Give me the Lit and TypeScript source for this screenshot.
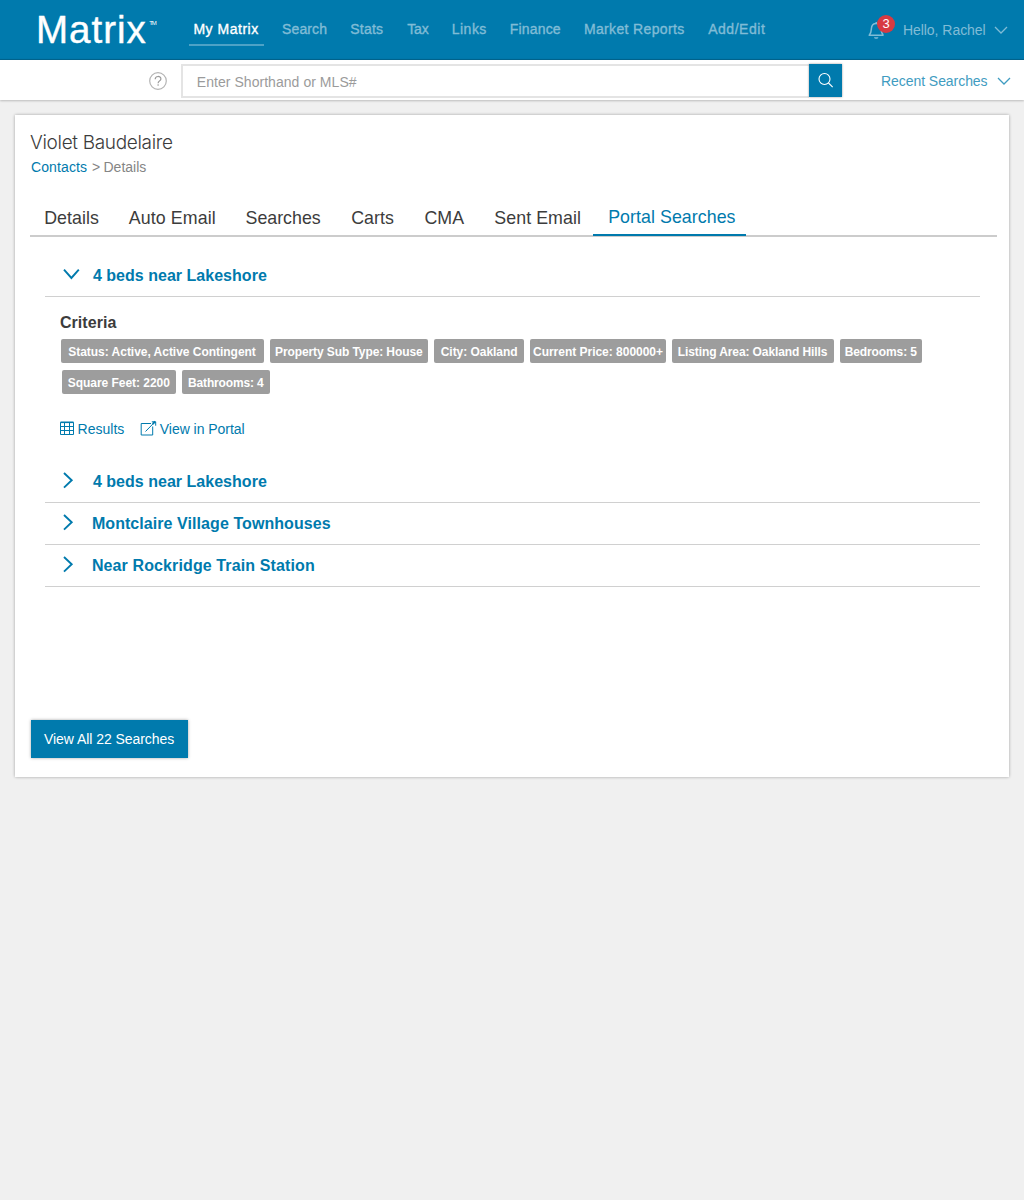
import { LitElement, html, css, svg } from "lit";
import { customElement, property } from "lit/decorators.js";

/** One line of text whose letters are tracked so that it fills a given width. */
@customElement("fit-label")
class FitLabel extends LitElement {
  @property() text = "";
  @property({ type: Number }) w = 0;

  static styles = css`
    :host { display: block; flex: none; white-space: pre; }
  `;

  updated() {
    const cs = getComputedStyle(this);
    const ctx = document.createElement("canvas").getContext("2d")!;
    ctx.font = `${cs.fontWeight} ${cs.fontSize} ${cs.fontFamily}`;
    const m = ctx.measureText(this.text);
    const ink = m.actualBoundingBoxLeft + m.actualBoundingBoxRight;
    this.style.width = `${this.w}px`;
    this.style.textIndent = `${m.actualBoundingBoxLeft}px`;
    this.style.letterSpacing = `${(this.w - ink) / Math.max(1, this.text.length - 1)}px`;
  }

  render() {
    return html`${this.text}`;
  }
}

const label = (text: string, w: number) => html`<fit-label .text=${text} .w=${w}></fit-label>`;

/** Text, text width, space to the next item. */
const NAV: [string, number, number][] = [
  ["My Matrix", 63.8, 18],
  ["Search", 44.2, 24.1],
  ["Stats", 32.8, 24.1],
  ["Tax", 21.6, 24],
  ["Links", 33.6, 24.3],
  ["Finance", 50.2, 24.1],
  ["Market Reports", 99.3, 23.9],
  ["Add/Edit", 56.8, 0],
];

const TABS: [string, number, number][] = [
  ["Details", 53.8, 45.2],
  ["Auto Email", 86, 128.8],
  ["Searches", 75.2, 245.6],
  ["Carts", 42.8, 351.2],
  ["CMA", 39.8, 424.5],
  ["Sent Email", 85.6, 494.4],
];

const TAGS: [string, number, number][][] = [
  [
    ["Status: Active, Active Contingent", 188.5, 203],
    ["Property Sub Type: House", 148, 158],
    ["City: Oakland", 76.5, 90],
    ["Current Price: 800000+", 130, 136],
    ["Listing Area: Oakland Hills", 150.5, 162],
    ["Bedrooms: 5", 72.5, 82],
  ],
  [
    ["Square Feet: 2200", 102.5, 114],
    ["Bathrooms: 4", 76, 88],
  ],
];

const SEARCHES: [string, number][] = [
  ["4 beds near Lakeshore", 174],
  ["Montclaire Village Townhouses", 237.8],
  ["Near Rockridge Train Station", 221],
];

const chevron = svg`<path d="M1 1l6 6 6-6" fill="none" stroke="currentColor" stroke-width="1.3"/>`;

@customElement("app-root")
class AppRoot extends LitElement {
  static styles = css`
    :host {
      display: block;
      min-height: 1200px;
      background: #f0f0f0;
      font: 14px/20px "Liberation Sans", Arial, sans-serif;
      color: #3c3c3c;
    }
    * { box-sizing: border-box; }
    svg { display: block; flex: none; }
    .header {
      height: 60px;
      display: flex;
      background: #007aad;
      box-shadow: inset 0 -2px 1px -1px #00628b;
      color: #80bcd6;
    }
    .logo { display: flex; flex: none; width: 188.5px; padding: 8px 0 0 39px; color: #fff; }
    .word { font-size: 38.5px; line-height: 44px; -webkit-text-stroke: 0.4px currentColor; }
    .tm { font-size: 6px; line-height: 10px; margin: 10px 0 0 3.8px; }
    .nav { display: flex; flex: none; width: 679.5px; padding-top: 19px; -webkit-text-stroke: 0.35px currentColor; }
    .nav-item { flex: none; height: 27px; }
    .nav-item.on { color: #fff; border-bottom: 2px solid #4da2c6; padding-left: 5.9px; width: 75.5px; }
    .user { display: flex; padding-top: 20px; }
    .bell { position: relative; width: 35.9px; }
    .bell svg { margin-top: 1px; }
    .badge {
      position: absolute; left: 9px; top: -5px; width: 18px; height: 18px; border-radius: 50%;
      background: #d73a42; color: #fff; font-size: 13px; line-height: 18px; text-align: center;
    }
    .user .chev { margin: 6px 0 0 8.1px; }
    .bar {
      height: 40px; display: flex; padding: 4px 0 0 149px; background: #fff;
      box-shadow: 0 1px 2px rgba(0, 0, 0, 0.22);
    }
    .help { margin: 8px 14px 0 0; }
    .input {
      width: 628px; height: 34px; border: 2px solid #e4e4e4; border-right: 0; padding: 6px 0 0 14.8px; color: #9b9b9b;
      margin-top: -0.5px;
    }
    .go {
      width: 33px; height: 33px; padding: 8px 0 0 9px; background: #007aad; color: #fff;
      box-shadow: 0 0 2px rgba(0, 0, 0, 0.4);
    }
    .recent { display: flex; padding: 7px 0 0 40px; color: #3f9cc1; }
    .recent .chev { margin: 6px 0 0 9px; }
    .card {
      margin: 15px 15px 0; height: 662px; padding: 16px 12px 0 15px; background: #fff;
      box-shadow: 0 0 3px rgba(0, 0, 0, 0.32);
    }
    .title { font: 300 19px/24px Inter, "Liberation Sans", sans-serif; }
    .crumbs { display: flex; gap: 5.1px; margin-top: 2px; padding-left: 1px; color: #858585; }
    .link { color: #007aad; }
    .tabs {
      display: flex; margin-top: 27px; height: 33px; border-bottom: 2px solid #ccc;
      font-size: 17.8px; line-height: 24px;
    }
    .tab { flex: none; padding-top: 2px; }
    .tab.on {
      width: 153px; height: 32px; padding: 1px 0 0 16.2px; border-bottom: 2px solid #007aad; color: #007aad;
    }
    .list { padding: 18px 17px 0 15px; }
    .row {
      display: flex; height: 42px; border-bottom: 1px solid #d0d0d0; padding: 11px 0 0 18px;
      color: #007aad; font-size: 16px; font-weight: bold;
    }
    .mark { width: 29.9px; }
    .body { height: 164px; padding: 16px 0 0 15px; }
    .criteria { font-size: 16px; font-weight: bold; }
    .tags { display: flex; gap: 6px; margin: 7px 0 0 1px; font-size: 12px; font-weight: bold; color: #fff; }
    .criteria + .tags { margin-top: 6px; }
    .tags + .tags { margin-left: 2px; }
    .tag {
      height: 24px; display: flex; justify-content: center; padding-top: 3px; border-radius: 2px; background: #9d9d9d;
    }
    .links { display: flex; margin-top: 25px; color: #007aad; }
    .links .ext { margin-left: 15.5px; }
    .all {
      display: block; width: 157px; height: 38px; margin: 133px 0 0 1px; padding: 9px 0 0 13px;
      background: #007aad; color: #fff; box-shadow: 0 0 3px rgba(0, 0, 0, 0.35);
    }
  `;

  row(text: string, w: number, open: boolean) {
    return html`<div class="row">
      <div class="mark">
        ${open
          ? html`<svg width="17" height="17"><path d="M1 3.7L8.4 12 15.8 3.7" fill="none" stroke="currentColor" stroke-width="1.9" /></svg>`
          : html`<svg width="17" height="18"><path d="M1 1l7.7 7.3L1 15.6" fill="none" stroke="currentColor" stroke-width="1.9" /></svg>`}
      </div>
      ${label(text, w)}
    </div>`;
  }

  render() {
    return html`
      <div class="header">
        <div class="logo">
          <div class="word">${label("Matrix", 106.5)}</div>
          <div class="tm">${label("TM", 7.5)}</div>
        </div>
        <div class="nav">
          ${NAV.map(([t, w, gap], i) =>
            html`<div class="nav-item ${i === 0 ? "on" : ""}" style="margin-right:${gap}px">${label(t, w)}</div>`)}
        </div>
        <div class="user">
          <div class="bell">
            <svg width="17" height="19" fill="none" stroke="currentColor" stroke-width="1.5">
              <path d="M.6 14.2h15M1.4 14C3.2 12.2 3.2 10 3.4 7.5 3.6 4.4 5.4 2.5 8.2 2.5s4.6 1.9 4.8 5c.2 2.5.4 4.7 2.2 6.500M8.200 2.500V1" />
              <path d="M6 16.200h4.400c-.3 2.200-4.100 2.200-4.400 0z" fill="currentColor" stroke="none" />
            </svg>
            <div class="badge">3</div>
          </div>
          ${label("Hello, Rachel", 81.7)}
          <svg class="chev" width="14" height="9">${chevron}</svg>
        </div>
      </div>
      <div class="bar">
        <svg class="help" width="18" height="18" fill="none" stroke="#b4b4b4" stroke-width="1.2">
          <circle cx="9" cy="9" r="8.3" />
          <path d="M6.2 7.3c0-3.8 5.7-3.6 5.7-.4 0 2-2.800 2-2.800 4.300" stroke="#999" />
          <circle cx="9.1" cy="13" r=".8" fill="#999" stroke="none" />
        </svg>
        <div class="input">${label("Enter Shorthand or MLS#", 159)}</div>
        <div class="go">
          <svg width="17" height="17" fill="none" stroke="currentColor" stroke-width="1.1">
            <circle cx="6.5" cy="7" r="5.5" /><path d="M10.5 11l4.2 4.2" />
          </svg>
        </div>
        <div class="recent">
          ${label("Recent Searches", 105.6)}
          <svg class="chev" width="14" height="9">${chevron}</svg>
        </div>
      </div>
      <div class="card">
        <div class="title">${label("Violet Baudelaire", 142)}</div>
        <div class="crumbs">
          <span class="link">${label("Contacts", 56)}</span>
          ${label(">", 7.3)}
          ${label("Details", 41.8)}
        </div>
        <div class="tabs">
          ${TABS.map(([t, w, x], i) => {
            const left = i === 0 ? x - 30 : x - TABS[i - 1][2] - TABS[i - 1][1];
            return html`<div class="tab" style="margin-left:${left}px">${label(t, w)}</div>`;
          })}
          <div class="tab on" style="margin-left:${593 - TABS[5][2] - TABS[5][1]}px">${label("Portal Searches", 126.5)}</div>
        </div>
        <div class="list">
          ${this.row("4 beds near Lakeshore", 174, true)}
          <div class="body">
            <div class="criteria">${label("Criteria", 56.4)}</div>
            ${TAGS.map((line) => html`<div class="tags">
              ${line.map(([t, w, box]) => html`<div class="tag" style="width:${box}px">${label(t, w)}</div>`)}
            </div>`)}
            <div class="links">
              <svg width="18.5" height="20" fill="none" stroke="currentColor">
                <path d="M.5 3.500h13v12H.5zM.5 7.500h13M.5 11.500h13M4.500 3.500v12M9.500 3.500v12" />
                <path d="M.5 3.300h13" stroke-width="1.6" />
              </svg>
              ${label("Results", 45.8)}
              <svg class="ext" width="20" height="20" fill="none" stroke="currentColor">
                <path d="M11 4.500H1.200v11.500h11.500V7.500M5.500 12.500l9.300-9.500M11.800 2.800h3.900v3.900" />
                <path d="M12.600 5l2.600-2.500" stroke-width="1.8" />
              </svg>
              ${label("View in Portal", 84.8)}
            </div>
          </div>
          ${SEARCHES.map(([t, w]) => this.row(t, w, false))}
        </div>
        <div class="all">${label("View All 22 Searches", 131)}</div>
      </div>
    `;
  }
}
